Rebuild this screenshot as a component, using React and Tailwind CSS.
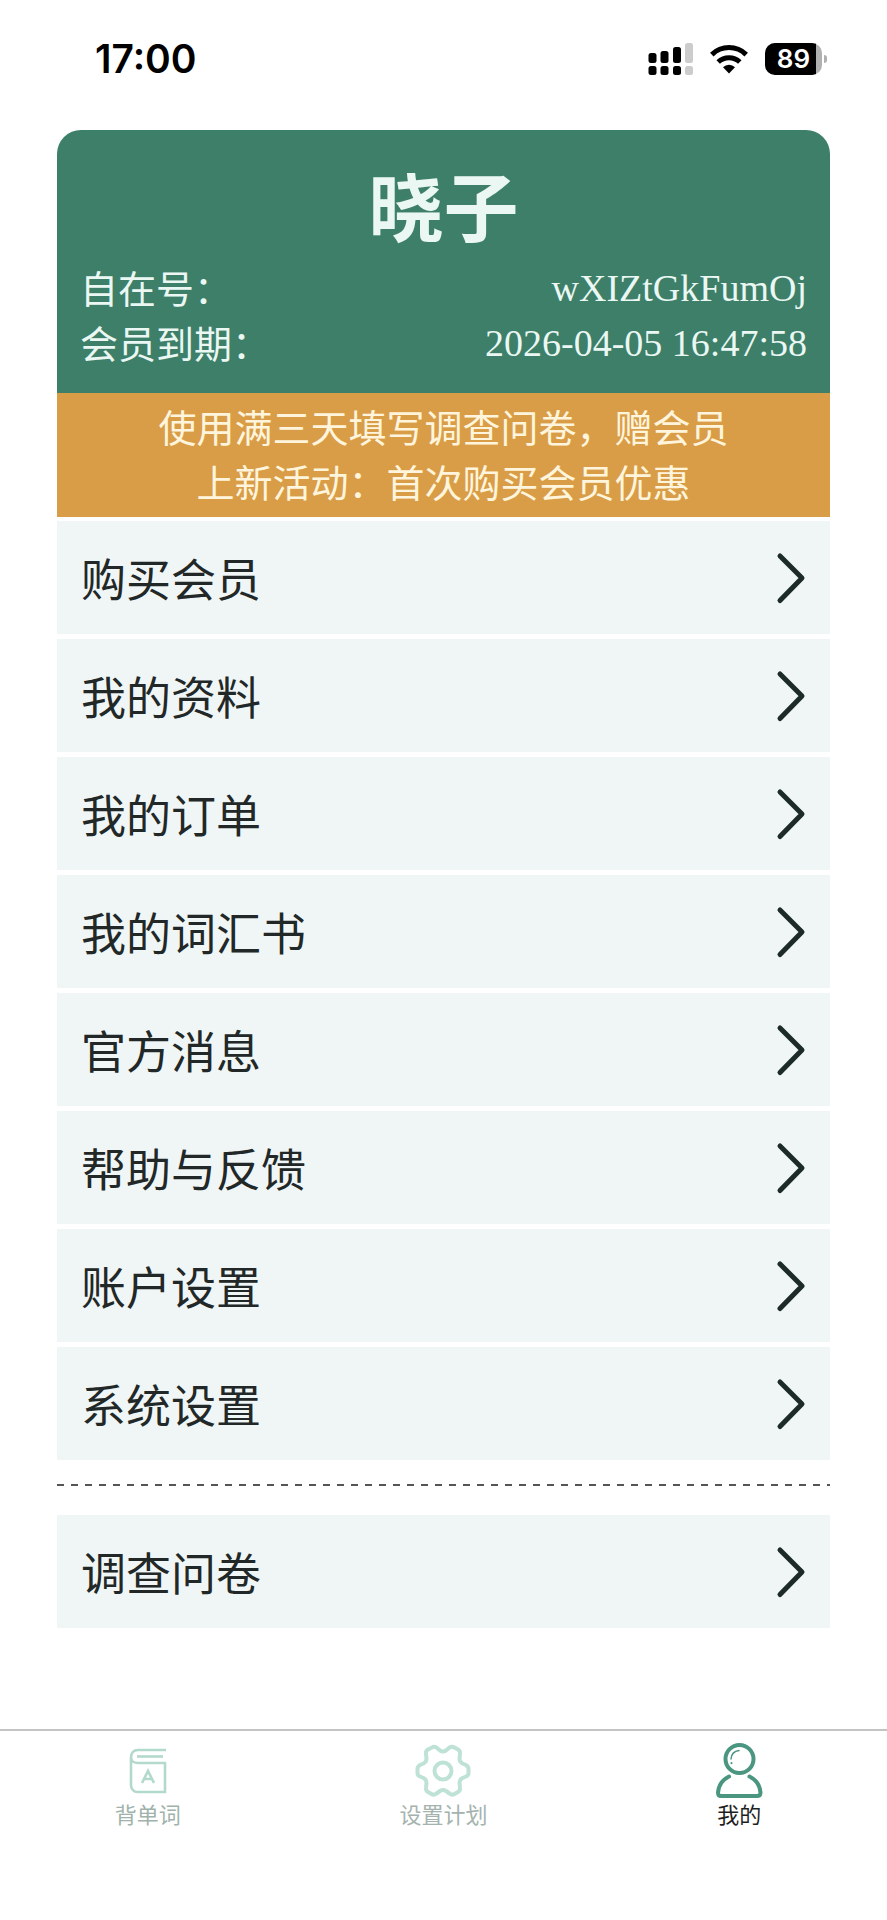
const menuItems = [
  '购买会员',
  '我的资料',
  '我的订单',
  '我的词汇书',
  '官方消息',
  '帮助与反馈',
  '账户设置',
  '系统设置',
];

function StatusBar() {
  return (
    <div className="flex items-center justify-between pt-[35px] pl-[95px] pr-[60px] pb-[47px] text-black">
      <span className="font-['Inter',sans-serif] text-[39px] leading-[48px] font-semibold">17:00</span>
      <div className="flex items-center gap-[17px]">
        <svg width="45" height="32" viewBox="0 0 45 32" aria-hidden="true">
          <g fill="#000">
            <rect x="0.5" y="10" width="8" height="10" rx="2.5" />
            <rect x="12.5" y="8" width="8" height="12" rx="2.5" />
            <rect x="25" y="4" width="8" height="16" rx="2.5" />
            <rect x="0.5" y="23" width="8" height="9" rx="2.5" />
            <rect x="12.5" y="23" width="8" height="9" rx="2.5" />
            <rect x="25" y="23" width="8" height="9" rx="2.5" />
          </g>
          <g fill="#ccc">
            <rect x="37" y="0" width="8" height="20" rx="2.5" />
            <rect x="37" y="23" width="8" height="9" rx="2.5" />
          </g>
        </svg>
        <svg width="38" height="30" viewBox="0 0 38 30" aria-hidden="true">
          <g fill="none" stroke="#000" strokeWidth="5">
            <path d="M1.8 10.6a24.6 24.6 0 0 1 34.4 0" />
            <path d="M8.2 18a15.6 15.6 0 0 1 21.6 0" />
          </g>
          <path d="M19 29.5l-6-6.2a8.4 8.4 0 0 1 12 0z" fill="#000" />
        </svg>
        <div className="flex items-center gap-[2px]">
          <div className="flex h-8 w-[57px] overflow-hidden rounded-[10px] bg-[#b0b0b0]">
            <span className="w-[51px] bg-black pl-[6px] text-center font-['Inter',sans-serif] text-[26px] leading-8 font-semibold text-white">
              89
            </span>
          </div>
          <span className="h-2 w-[3px] rounded-r-full bg-[#b0b0b0]" />
        </div>
      </div>
    </div>
  );
}

function MenuRow({ label }) {
  return (
    <a href="#" className="flex h-[113px] items-center justify-between bg-[#f0f6f6] px-6 text-[#222827]">
      <span className="text-[45px] leading-[60px]">{label}</span>
      <svg width="31" height="54" viewBox="0 0 31 54" fill="none" aria-hidden="true">
        <path d="M5 5l22 22L5 49.500" stroke="#1c2b28" strokeWidth="5" strokeLinecap="round" strokeLinejoin="round" />
      </svg>
    </a>
  );
}

function BookIcon() {
  return (
    <svg width="56" height="56" viewBox="0 0 56 56" fill="none" stroke="#b3d9cc" strokeWidth="2.6" aria-hidden="true">
      <path d="M46 7H18C13.500 7 11 10 11 14.500C11 18 14 20 18 20H45V49H17.500a6.500 6.500 0 0 1-6.500-6.500V14" />
      <path d="M17 13.500h26" />
      <path d="M22 40l6-12 6 12M24 36h8" />
    </svg>
  );
}

function GearIcon() {
  return (
    <svg width="56" height="56" viewBox="0 0 56 56" fill="none" stroke="#bfe2d7" strokeWidth="4" strokeLinejoin="round" aria-hidden="true">
      <path d="M17 4.500Q19 3 21.500 4.500L25 7.500Q28 9.500 31 7.500L34.500 4.500Q37 3 39.500 4.500L43 6.500Q45.500 8 45 11L44.500 15.500Q44.500 19 47.500 20.500L51 22Q53.500 23.500 53.500 26V30Q53.500 32.500 51 33.500L47.500 35Q44.500 36.500 44.500 40L45 44.500Q45.500 47.500 43 49L39.500 51Q37 52.500 34.500 50.500L31 48Q28 46 25 48L21.500 50.500Q19 52.500 16.500 51L13 49Q10.500 47.500 11 44.500L11.500 40Q11.500 36.500 8.500 35L5 33.500Q2.500 32.500 2.500 30V26Q2.500 23.500 5 22L8.500 20.500Q11.500 19 11.500 15.500L11 11Q10.500 8 13 6.500Z" />
      <circle cx="28" cy="28" r="8.500" />
    </svg>
  );
}

function UserIcon() {
  return (
    <svg width="56" height="56" viewBox="0 0 56 56" fill="none" stroke="#4b9680" strokeLinecap="round" aria-hidden="true">
      <circle cx="28.500" cy="16" r="14" strokeWidth="4" />
      <path d="M18 33.500C11 37 7.500 43 7 49.500Q7 53 10 53H46Q49.500 53 49.500 49.500C49 43 45.500 37 38.500 33.500" strokeWidth="4" />
      <path d="M28 7.500Q20.500 8.500 20 16" strokeWidth="1.500" />
      <path d="M20.500 20v.2" strokeWidth="2" />
    </svg>
  );
}

const tabs = [
  { label: '背单词', Icon: BookIcon, color: 'text-[#9fb3ac]' },
  { label: '设置计划', Icon: GearIcon, color: 'text-[#a5b3af]' },
  { label: '我的', Icon: UserIcon, color: 'text-[#1f1f1f]' },
];

export default function App() {
  return (
    <div className="flex min-h-screen flex-col bg-white font-['Noto_Sans_CJK_SC',sans-serif]">
      <StatusBar />

      <main className="mx-[57px]">
        <header className="rounded-t-[24px] bg-[#3d7f68] px-[23px] pt-6 pb-[22px] text-[#eaf7f3]">
          <h1 className="mb-[7px] text-center text-[75px] leading-[100px] font-bold">晓子</h1>
          <dl className="text-[38px]">
            <div className="flex justify-between">
              <dt className="leading-[51px]">自在号：</dt>
              <dd className="font-['Liberation_Serif',serif] leading-[55px]">wXIZtGkFumOj</dd>
            </div>
            <div className="flex justify-between">
              <dt className="leading-[51px]">会员到期：</dt>
              <dd className="font-['Liberation_Serif',serif] leading-[55px]">2026-04-05 16:47:58</dd>
            </div>
          </dl>
        </header>

        <div className="bg-[#d99d48] pt-[5px] pb-[9px] text-center text-[38px] leading-[55px] text-[#fff5dc]">
          <p>使用满三天填写调查问卷，赠会员</p>
          <p>上新活动：首次购买会员优惠</p>
        </div>

        <nav className="mt-1 flex flex-col gap-[5px]">
          {menuItems.map((label) => (
            <MenuRow key={label} label={label} />
          ))}
        </nav>

        <div className="mt-6 mb-[29px] h-[2px] bg-[repeating-linear-gradient(to_right,#555_0_7px,transparent_7px_14px)]" />

        <MenuRow label="调查问卷" />
      </main>

      <nav className="mt-auto grid h-[191px] grid-cols-3 border-t-2 border-[#c4c4c4] pt-3">
        {tabs.map(({ label, Icon, color }) => (
          <a key={label} href="#" className={`flex flex-col items-center ${color}`}>
            <Icon />
            <span className="text-[22px] leading-[28px]">{label}</span>
          </a>
        ))}
      </nav>
    </div>
  );
}
